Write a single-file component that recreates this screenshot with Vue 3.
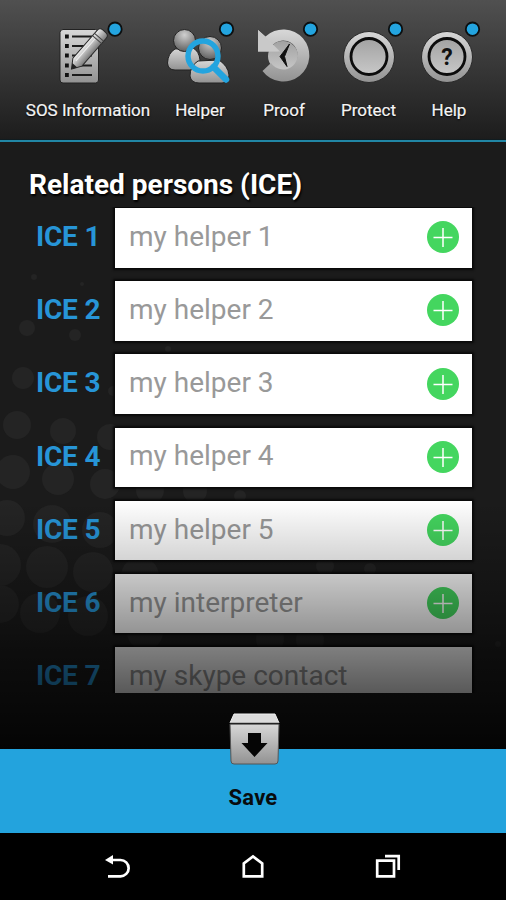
<script setup>
import { ref } from 'vue'

const tabs = [
  { id: 'sos', label: 'SOS Information', dotX: 65 },
  { id: 'helper', label: 'Helper', dotX: 64.5 },
  { id: 'proof', label: 'Proof', dotX: 64.5 },
  { id: 'protect', label: 'Protect', dotX: 64.5 },
  { id: 'help', label: 'Help', dotX: 61.5 }
]

const contacts = ref([
  { label: 'ICE 1', placeholder: 'my helper 1' },
  { label: 'ICE 2', placeholder: 'my helper 2' },
  { label: 'ICE 3', placeholder: 'my helper 3' },
  { label: 'ICE 4', placeholder: 'my helper 4' },
  { label: 'ICE 5', placeholder: 'my helper 5' },
  { label: 'ICE 6', placeholder: 'my interpreter' },
  { label: 'ICE 7', placeholder: 'my skype contact' }
])

// halftone dots in the page background: x, y, radius
const dots = [
  [34, 135, 3], [82, 142, 2], [27, 186, 8], [75, 193, 6], [168, 207, 3],
  [23, 236, 11], [113, 249, 5],
  [17, 283, 14], [63, 289, 13], [110, 295, 13],
  [13, 330, 17], [58, 337, 16], [105, 342, 15], [150, 348, 14], [195, 349, 12], [240, 354, 6],
  [7, 376, 18], [52, 382, 19], [100, 388, 18],
  [0, 423, 21], [47, 425, 21], [93, 430, 20], [140, 434, 19], [325, 424, 9], [370, 427, 6],
  [0, 462, 19], [40, 471, 20], [88, 474, 20], [145, 490, 18], [270, 497, 14], [310, 498, 14],
  [498, 502, 3]
]
</script>

<template>
  <div class="screen">
    <svg class="defs" width="0" height="0">
      <defs>
        <linearGradient id="metal" x1="0" y1="0" x2="0" y2="1">
          <stop offset="0" stop-color="#d8d8d8" />
          <stop offset="1" stop-color="#929292" />
        </linearGradient>
        <linearGradient id="metalFlip" x1="0" y1="0" x2="0" y2="1">
          <stop offset="0" stop-color="#a2a2a2" />
          <stop offset="1" stop-color="#c8c8c8" />
        </linearGradient>
        <linearGradient id="pencil" x1="0" y1="0" x2="0" y2="1">
          <stop offset="0" stop-color="#f0f0f0" />
          <stop offset="1" stop-color="#777" />
        </linearGradient>
        <radialGradient id="head" cx="0.5" cy="0.25" r="0.75">
          <stop offset="0" stop-color="#d0d0d0" />
          <stop offset="1" stop-color="#606060" />
        </radialGradient>
      </defs>
    </svg>

    <header class="tabs">
      <button v-for="tab in tabs" :key="tab.id" class="tab">
        <svg class="tab-icon" viewBox="0 0 76 76">
          <g v-if="tab.id === 'sos'">
            <rect x="10" y="15.500" width="38.500" height="53.500" rx="3" fill="url(#metal)" stroke="#222" stroke-width="1" />
            <path d="M15 22.500h3.800M15 32h3.800M15 41.500h3.800M15 51.500h3.800M15 61h3.800" stroke="#111" stroke-width="4" />
            <path d="M22 22.500h20M22 32h20M22 41.500h20M22 51.500h20M22 61h20" stroke="#1b1b1b" stroke-width="2.200" />
            <g transform="translate(21.500 55) rotate(-49)">
              <path d="M0 0L9-6H46q4 0 4 4v4q0 4-4 4H9z" fill="url(#pencil)" stroke="#292929" />
              <path d="M0 0L5-3.300V3.300z" fill="#222" />
              <path d="M39-6V6M42-6V6" stroke="#444" />
              <path d="M9-2H38" stroke="#eee" />
            </g>
          </g>
          <g v-else-if="tab.id === 'helper'" stroke="#222">
            <path d="M13 35Q6 39 5.500 49Q6 56 13 56H34Q39 54 38 46Q37 37 31 34z" fill="url(#metal)" />
            <circle cx="22.500" cy="26.500" r="11" fill="url(#head)" />
            <path d="M36 47Q28 52 28 62Q29 69 37 69H60Q67 69 67 61Q66 52 57 46z" fill="url(#metal)" />
            <circle cx="48" cy="34" r="11.500" fill="url(#head)" />
            <path d="M51.500 53L64 65.500" stroke="#23a4df" stroke-width="6.500" stroke-linecap="round" />
            <circle cx="41" cy="42" r="15" fill="none" stroke="#23a4df" stroke-width="5.400" />
          </g>
          <g v-else-if="tab.id === 'proof'">
            <circle cx="37" cy="42" r="15" fill="url(#metalFlip)" />
            <path d="M12 16L19.500 22.500A26 26 0 1 1 16.500 57L25 49A14.500 14.500 0 1 0 25 33L32 37.500H12z" fill="url(#metal)" />
            <path d="M12 16L19 22.500L34 37.500H12z" fill="#c9c9c9" />
            <path d="M43.500 30L34 42.500L41 52.500L38.500 42.500z" fill="#111" stroke="#111" stroke-width="1" />
          </g>
          <g v-else-if="tab.id === 'protect'">
            <circle cx="38" cy="43" r="25.500" fill="url(#metal)" stroke="#292929" />
            <circle cx="38" cy="42.500" r="18" fill="url(#metalFlip)" stroke="#0c0c0c" stroke-width="2.800" />
          </g>
          <g v-else>
            <circle cx="36" cy="43" r="25.500" fill="url(#metal)" stroke="#292929" />
            <circle cx="36" cy="42.500" r="18" fill="url(#metalFlip)" stroke="#0c0c0c" stroke-width="2.800" />
            <text x="36" y="50.500" class="question">?</text>
          </g>
          <circle :cx="tab.dotX" cy="15.200" r="6.700" fill="#23a4df" stroke="#0c0f10" stroke-width="1.800" />
        </svg>
        <span class="tab-label">{{ tab.label }}</span>
      </button>
    </header>

    <main class="content">
      <svg class="halftone" viewBox="0 0 506 608">
        <circle v-for="(dot, i) in dots" :key="i" :cx="dot[0]" :cy="dot[1]" :r="dot[2]" />
      </svg>
      <h1 class="title">Related persons (ICE)</h1>
      <div class="list">
        <div v-for="contact in contacts" :key="contact.label" class="row">
          <span class="row-label">{{ contact.label }}</span>
          <div class="field">
            <span class="placeholder">{{ contact.placeholder }}</span>
            <svg class="add" viewBox="0 0 32 32">
              <circle cx="16" cy="16" r="16" fill="#44d65f" />
              <path d="M6.500 16.500h19M16 7v19" stroke="#fff" stroke-width="1.500" />
            </svg>
          </div>
        </div>
      </div>
      <div class="fade"></div>
    </main>

    <footer class="save-bar">
      <svg class="save-icon" viewBox="0 0 52 54">
        <path d="M5 1H46L50 10H1z" fill="#dcdcdc" stroke="#f0f0f0" />
        <path d="M1 11H50L49 48Q49 51 46 51H5Q2 51 2 48z" fill="url(#metal)" stroke="#555" />
        <path d="M1 10.500H50" stroke="#222" stroke-width="1.500" />
        <path d="M19 20H32V30H38.500L25.500 44L12.500 30H19z" fill="#050505" />
      </svg>
      <span class="save-label">Save</span>
    </footer>

    <nav class="system-nav">
      <svg viewBox="0 0 28 28">
        <path d="M6 6H16.500A8 8 0 0 1 16.500 22.300H4" fill="none" stroke="#fff" stroke-width="2.700" />
        <path d="M1 6L9 1V10.500z" fill="#fff" />
      </svg>
      <svg viewBox="0 0 28 28">
        <path d="M4.800 22.300V9.500L14 2.500L23.200 9.500V22.300z" fill="none" stroke="#fff" stroke-width="2.700" />
      </svg>
      <svg viewBox="0 0 28 28">
        <path d="M3.200 6.700H20V22.300H3.200zM11 2.200H24.700V16" fill="none" stroke="#fff" stroke-width="2.700" />
      </svg>
    </nav>
  </div>
</template>

<style>
body {
  margin: 0;
  background: #000;
}
</style>

<style scoped>
.screen {
  width: 506px;
  height: 900px;
  display: flex;
  flex-direction: column;
  overflow: hidden;
  background: #1b1b1b;
  font-family: Roboto, "Liberation Sans", sans-serif;
}

.defs {
  position: absolute;
}

.tabs {
  box-sizing: border-box;
  height: 141.500px;
  flex-shrink: 0;
  display: grid;
  grid-template-columns: 128px 96px 72px 97px 64px;
  padding: 14px 0 0 24px;
  background: linear-gradient(#505050, #1c1c1c);
  border-bottom: 2px solid #2186a5;
  box-shadow: inset 0 -1px #101c20;
}

.tab {
  display: flex;
  flex-direction: column;
  align-items: center;
  padding: 0;
  border: 0;
  background: none;
  font-family: inherit;
}

.tab-icon {
  width: 76px;
  height: 76px;
  flex-shrink: 0;
}

.question {
  font-size: 23px;
  font-weight: 700;
  text-anchor: middle;
  fill: #111;
}

.tab-label {
  margin-top: 9px;
  font-size: 17px;
  line-height: 22px;
  white-space: nowrap;
  color: #f4f4f4;
  -webkit-text-stroke: 0.2px #f4f4f4;
  text-shadow: 0 1px 2px #000;
}

.content {
  position: relative;
  height: 607.500px;
  flex-shrink: 0;
}

.halftone {
  position: absolute;
  top: 0;
  left: 0;
  width: 506px;
  height: 608px;
  fill: #242424;
}

.title {
  position: relative;
  margin: 0;
  padding: 26px 0 0 29px;
  font-size: 28px;
  line-height: 34px;
  font-weight: 700;
  color: #fff;
  text-shadow: 1px 2px 2px #000;
}

.list {
  position: relative;
  height: 486px;
  margin-top: 5px;
  padding-top: 1.500px;
  box-sizing: border-box;
  display: flex;
  flex-direction: column;
  gap: 13.700px;
  overflow: hidden;
}

.row {
  display: flex;
  flex-shrink: 0;
  height: 59.500px;
}

.row-label {
  box-sizing: border-box;
  width: 115px;
  padding-left: 36px;
  font-size: 28px;
  line-height: 57px;
  font-weight: 700;
  letter-spacing: -0.200px;
  color: #2795d7;
}

.field {
  box-sizing: border-box;
  width: 356.500px;
  padding: 0 13px 0 14px;
  display: flex;
  align-items: center;
  justify-content: space-between;
  background: #fff;
  box-shadow: 0 0 2px 2px #0a0a0a;
}

.placeholder {
  font-size: 28px;
  line-height: 57px;
  padding-bottom: 3px;
  color: #999;
}

.add {
  width: 32px;
  height: 32px;
  margin-bottom: 1px;
}

.row:last-child .add {
  display: none;
}

.fade {
  position: absolute;
  left: 0;
  right: 0;
  top: 358px;
  bottom: 0;
  background: linear-gradient(rgba(0, 0, 0, 0), rgba(0, 0, 0, 0.170) 60px, rgba(0, 0, 0, 0.220) 74px, rgba(0, 0, 0, 0.420) 133px, rgba(0, 0, 0, 0.500) 147px, rgba(0, 0, 0, 0.650) 193px, rgba(0, 0, 0, 0.850) 249px);
}

.save-bar {
  position: relative;
  height: 84px;
  flex-shrink: 0;
  display: flex;
  flex-direction: column;
  align-items: center;
  background: #23a3dd;
}

.save-icon {
  width: 52px;
  height: 54px;
  margin-top: -36px;
  margin-left: 3px;
}

.save-label {
  margin-top: 17px;
  font-size: 22px;
  line-height: 28px;
  font-weight: 700;
  letter-spacing: 0.200px;
  color: #080c0e;
}

.system-nav {
  flex: 1;
  display: flex;
  justify-content: center;
  align-items: flex-start;
  gap: 107px;
  padding-top: 21px;
  background: #000;
}

.system-nav svg {
  width: 28px;
  height: 28px;
}
</style>
